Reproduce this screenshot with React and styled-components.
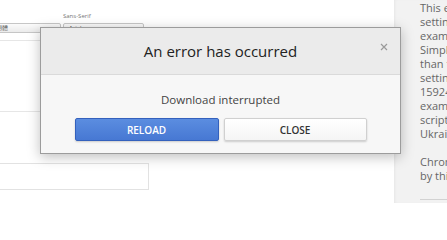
import React from 'react';
import styled, { createGlobalStyle } from 'styled-components';

const Global = createGlobalStyle`
  html, body { margin: 0; padding: 0; background: #fff; }
  body { font-family: "Open Sans", "Liberation Sans", sans-serif; }
  * { box-sizing: border-box; }
`;

const Page = styled.div`
  position: relative;
  width: 447px;
  height: 203px;
  overflow: hidden;
  display: grid;
  grid-template-columns: 394px 1fr;
  background: linear-gradient(to right, #fff 394px, #f2f2f2 394px);
`;

const Main = styled.main`
  display: flex;
  flex-direction: column;
  padding-top: 12px;
  overflow: hidden;
`;

const FontRow = styled.div`
  display: flex;
  gap: 2px;
  margin-left: -22px;
`;

const Field = styled.div`
  display: flex;
  flex-direction: column;
  gap: 3px;
  width: ${p => p.$w}px;
`;

const Label = styled.span`
  font-size: 6px;
  line-height: 8px;
  height: 8px;
  color: #777;
`;

const Select = styled.div`
  height: 10px;
  border: 1px solid #c6c6c6;
  border-radius: 2px;
  background: linear-gradient(#fbfbfb, #ebebeb);
  font-size: 6px;
  color: #444;
  display: flex;
  align-items: center;
  justify-content: space-between;
  padding: 0 3px 0 5px;
  &::after {
    content: '';
    border-left: 2px solid transparent;
    border-right: 2px solid transparent;
    border-top: 2px solid #777;
  }
`;

const Preview = styled.div`
  margin-top: 7px;
  margin-left: -30px;
  width: 400px;
  height: 72px;
  border: 1px solid #e6e6e6;
`;

const Input = styled.div`
  margin-top: 51px;
  margin-left: -30px;
  width: 179px;
  height: 27px;
  border: 1px solid #e2e2e2;
`;

const Sidebar = styled.aside`
  background: #f2f2f2;
  box-shadow: inset 2px 0 3px -1px rgba(0, 0, 0, 0.05);
  padding: 1px 0 0 26px;
  color: #666;
  font-size: 11px;
  line-height: 14px;
  white-space: nowrap;
  overflow: hidden;
`;

const Para = styled.p`
  margin: 0 0 ${p => (p.$last ? 0 : 14)}px;
`;

const Rule = styled.hr`
  border: 0;
  border-top: 1px solid #d2d2d2;
  margin: 16px 0 0;
  width: 60px;
`;

const Dialog = styled.div`
  position: absolute;
  left: 40px;
  top: 27px;
  width: 361px;
  height: 127px;
  border: 1px solid #9c9c9c;
  background: #f7f7f7;
  box-shadow: 0 3px 12px rgba(0, 0, 0, 0.25);
  display: flex;
  flex-direction: column;
`;

const Header = styled.div`
  position: relative;
  height: 47px;
  flex: 0 0 47px;
  background: #ebebeb;
  border-bottom: 1px solid #dadada;
  display: flex;
  align-items: center;
  justify-content: center;
`;

const Title = styled.h1`
  margin: 0;
  font-size: 15px;
  font-weight: 400;
  color: #222;
`;

const CloseX = styled.button`
  position: absolute;
  right: 11px;
  top: 14px;
  width: 10px;
  height: 10px;
  padding: 0;
  border: 0;
  background: none;
  display: flex;
  align-items: center;
  justify-content: center;
`;

const Body = styled.div`
  flex: 1;
  display: flex;
  flex-direction: column;
  align-items: center;
  padding-top: 17px;
`;

const Message = styled.p`
  margin: 0;
  font-size: 11.5px;
  line-height: 16px;
  color: #444;
`;

const Buttons = styled.div`
  display: flex;
  gap: 5px;
  margin-top: 10px;
`;

const Button = styled.button`
  width: ${p => p.$w}px;
  height: 23px;
  border-radius: 2px;
  font-family: "Open Sans", "Liberation Sans", sans-serif;
  font-size: 10px;
  font-weight: 600;
  padding: 0;
  cursor: pointer;
  border: 1px solid ${p => (p.$primary ? '#3461bd' : '#d0d0d0')};
  color: ${p => (p.$primary ? '#fff' : '#333')};
  background: ${p =>
    p.$primary
      ? 'linear-gradient(#5b8de0, #4778d3)'
      : 'linear-gradient(#ffffff, #f5f5f5)'};
  box-shadow: 0 1px 2px rgba(0, 0, 0, 0.18);
`;

const sidebarLines = [
  'This extension',
  'settings',
  'example',
  'Simplified',
  'than the',
  'settings',
  '159245',
  'example',
  'scripts',
  'Ukrainian',
];

export default function App() {
  return (
    <>
      <Global />
      <Page>
        <Main>
          <FontRow>
            <Field $w={83}>
              <Label>Serif</Label>
              <Select>新細明體</Select>
            </Field>
            <Field $w={81}>
              <Label>Sans-Serif</Label>
              <Select>Arial</Select>
            </Field>
          </FontRow>
          <Preview />
          <Input />
        </Main>
        <Sidebar>
          <Para>
            {sidebarLines.map((l, i) => (
              <React.Fragment key={i}>
                {l}
                <br />
              </React.Fragment>
            ))}
          </Para>
          <Para $last>
            Chrome
            <br />
            by this
          </Para>
          <Rule />
        </Sidebar>
        <Dialog role="dialog">
          <Header>
            <Title>An error has occurred</Title>
            <CloseX aria-label="Close">
              <svg width="8" height="8" viewBox="0 0 8 8">
                <path d="M1 1L7 7M7 1L1 7" stroke="#9a9a9a" strokeWidth="1.2" />
              </svg>
            </CloseX>
          </Header>
          <Body>
            <Message>Download interrupted</Message>
            <Buttons>
              <Button $primary $w={144}>RELOAD</Button>
              <Button $w={143}>CLOSE</Button>
            </Buttons>
          </Body>
        </Dialog>
      </Page>
    </>
  );
}
